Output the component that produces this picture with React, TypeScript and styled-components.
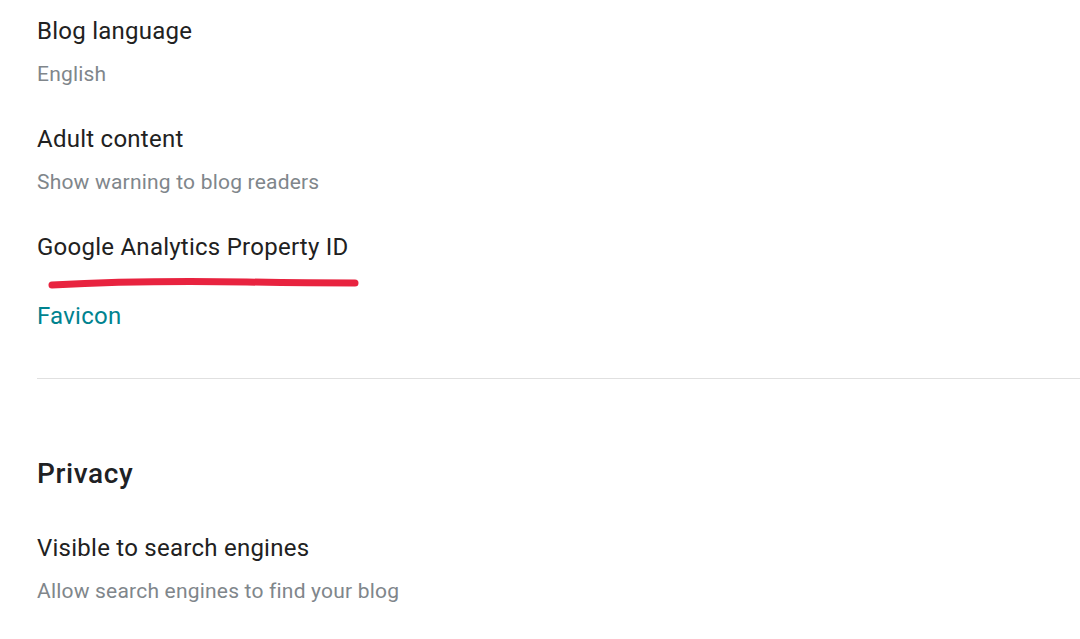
import React from "react";
import styled, { createGlobalStyle } from "styled-components";

const GlobalStyle = createGlobalStyle`
  html, body {
    margin: 0;
    padding: 0;
    background: #ffffff;
    font-family: Roboto, "Noto Sans", sans-serif;
  }
`;

const Page = styled.div`
  display: flex;
  flex-direction: column;
  padding-top: 16px;
  padding-left: 37px;
  width: 1043px;
`;

const Setting = styled.div<{ gapAfter?: number }>`
  display: flex;
  flex-direction: column;
  gap: 13px;
  margin-bottom: ${(props) => props.gapAfter ?? 35}px;
`;

const Title = styled.div`
  font-size: 24px;
  line-height: 30px;
  letter-spacing: 0.25px;
  color: #212121;
`;

const Subtitle = styled.div`
  font-size: 21px;
  line-height: 30px;
  letter-spacing: 0.2px;
  color: #80868b;
`;

const LinkItem = styled.div`
  font-size: 24px;
  line-height: 30px;
  letter-spacing: 0.25px;
  color: #00838f;
`;

const Scribble = styled.svg`
  display: block;
  margin-left: 10px;
  width: 314px;
  height: 39px;
`;

const Divider = styled.div`
  height: 1px;
  background: #e0e0e0;
  margin-top: 47px;
  margin-bottom: 78px;
`;

const SectionHeading = styled.div`
  font-size: 28px;
  font-weight: 500;
  line-height: 34px;
  letter-spacing: 0.6px;
  color: #202124;
  margin-bottom: 42px;
`;

export default function App() {
  return (
    <>
      <GlobalStyle />
      <Page>
        <Setting>
          <Title>Blog language</Title>
          <Subtitle>English</Subtitle>
        </Setting>
        <Setting>
          <Title>Adult content</Title>
          <Subtitle>Show warning to blog readers</Subtitle>
        </Setting>
        <Setting gapAfter={0}>
          <Title>Google Analytics Property ID</Title>
        </Setting>
        <Scribble viewBox="0 0 314 39">
          <path
            d="M5 23 C 60 20, 140 19, 200 20 S 290 21, 308 21"
            fill="none"
            stroke="#e8233f"
            strokeWidth="7"
            strokeLinecap="round"
          />
        </Scribble>
        <LinkItem>Favicon</LinkItem>
        <Divider />
        <SectionHeading>Privacy</SectionHeading>
        <Setting>
          <Title>Visible to search engines</Title>
          <Subtitle>Allow search engines to find your blog</Subtitle>
        </Setting>
      </Page>
    </>
  );
}
